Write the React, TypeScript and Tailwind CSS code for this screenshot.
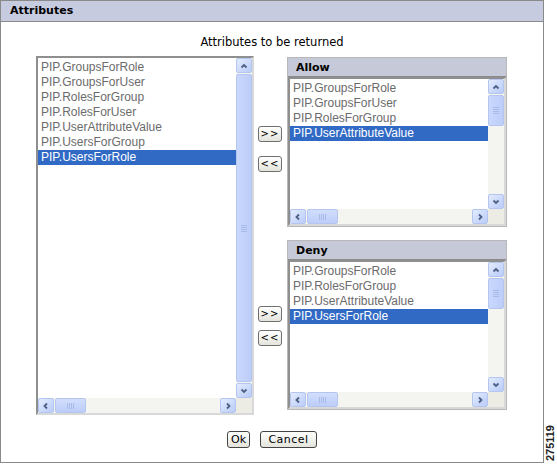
import React from "react";

type Dir = "up" | "down" | "left" | "right";

const chevrons: Record<Dir, string> = {
  up: "M1.5 5.5 L4 3 L6.5 5.5",
  down: "M1.5 2.5 L4 5 L6.5 2.5",
  left: "M5 1.5 L2.5 4 L5 6.5",
  right: "M3 1.5 L5.5 4 L3 6.5",
};

const ScrollBtn = ({ dir }: { dir: Dir }) => (
  <div className="w-[16px] h-[15px] shrink-0 rounded-[2px] border border-[#b4c6f0] bg-gradient-to-br from-[#e3ebfe] to-[#b9ccf8] flex items-center justify-center">
    <svg width="8" height="8" viewBox="0 0 8 8">
      <path d={chevrons[dir]} stroke="#4d6185" strokeWidth="1.8" fill="none" />
    </svg>
  </div>
);

const Grip = ({ vertical }: { vertical?: boolean }) =>
  vertical ? (
    <div className="flex flex-col gap-[1px]">
      {[0, 1, 2, 3].map((i) => (
        <div key={i} className="w-[6px] h-[1px] bg-[#a8bbe8]" />
      ))}
    </div>
  ) : (
    <div className="flex gap-[1px]">
      {[0, 1, 2, 3].map((i) => (
        <div key={i} className="w-[1px] h-[6px] bg-[#a8bbe8]" />
      ))}
    </div>
  );

const VScroll = ({ thumb }: { thumb: number | "full" }) => (
  <div className="w-[16px] flex flex-col bg-[#f4f4f0]">
    <ScrollBtn dir="up" />
    <div className="flex-1 flex flex-col py-[1px]">
      <div
        className={
          "w-[16px] rounded-[2px] border border-[#b4c6f0] bg-gradient-to-r from-[#c9d8fd] to-[#bccdf8] flex items-center justify-center " +
          (thumb === "full" ? "flex-1" : "")
        }
        style={thumb === "full" ? undefined : { height: thumb }}
      >
        <Grip vertical />
      </div>
    </div>
    <ScrollBtn dir="down" />
  </div>
);

const HScroll = () => (
  <div className="h-[15px] flex bg-[#f4f4f0]">
    <ScrollBtn dir="left" />
    <div className="flex-1 flex px-[1px]">
      <div className="w-[31px] h-[15px] rounded-[2px] border border-[#b4c6f0] bg-gradient-to-b from-[#d2defd] to-[#bccdf8] flex items-center justify-center">
        <Grip />
      </div>
    </div>
    <ScrollBtn dir="right" />
    <div className="w-[16px] bg-[#ecebe4]" />
  </div>
);

const ListBox = ({
  items,
  selected,
  height,
  thumb,
}: {
  items: string[];
  selected: number;
  height: number;
  thumb: number | "full";
}) => (
  <div
    className="w-[218px] flex flex-col border-2 border-t-[#8f8f8f] border-l-[#8f8f8f] border-r-[#d8d8d8] border-b-[#d8d8d8] bg-white"
    style={{ height }}
  >
    <div className="flex-1 flex min-h-0">
      <div className="flex-1 pt-[2px] font-['Liberation_Sans',Arial,sans-serif] text-[12px]">
        {items.map((it, i) => (
          <div
            key={it}
            className={
              "h-[15px] leading-[15px] pl-[3px] " +
              (i === selected ? "bg-[#316ac5] text-white" : "text-[#6b6b6b]")
            }
          >
            {it}
          </div>
        ))}
      </div>
      <VScroll thumb={thumb} />
    </div>
    <HScroll />
  </div>
);

const ArrowBtn = ({ label }: { label: string }) => (
  <button className="w-[24px] h-[16px] rounded-[3px] border border-[#6f6f6f] bg-gradient-to-b from-white to-[#e4e4dc] text-[10px] leading-[12px] text-black font-['DejaVu_Sans',sans-serif] tracking-[1px]">
    {label}
  </button>
);

const Panel = ({
  title,
  items,
  selected,
}: {
  title: string;
  items: string[];
  selected: number;
}) => (
  <div className="w-[220px] border border-[#b8b8b8] bg-white">
    <div className="h-[19px] bg-[#c6cad8] border-b border-[#8a8a8a] pl-[8px] text-[11px] leading-[19px] font-bold text-black font-['DejaVu_Sans',sans-serif]">
      {title}
    </div>
    <ListBox items={items} selected={selected} height={149} thumb={31} />
  </div>
);

export default function App() {
  const available = [
    "PIP.GroupsForRole",
    "PIP.GroupsForUser",
    "PIP.RolesForGroup",
    "PIP.RolesForUser",
    "PIP.UserAttributeValue",
    "PIP.UsersForGroup",
    "PIP.UsersForRole",
  ];
  const allow = [
    "PIP.GroupsForRole",
    "PIP.GroupsForUser",
    "PIP.RolesForGroup",
    "PIP.UserAttributeValue",
  ];
  const deny = [
    "PIP.GroupsForRole",
    "PIP.RolesForGroup",
    "PIP.UserAttributeValue",
    "PIP.UsersForRole",
  ];

  return (
    <div className="w-[557px] h-[466px] bg-white flex">
      <div className="w-[544px] h-[463px] border border-[#8a8a8a] flex flex-col">
        <div className="h-[21px] bg-[#c6cbe0] border-b border-[#8a8a8a] pl-[9px] text-[11px] leading-[20px] font-bold text-black font-['DejaVu_Sans',sans-serif]">
          Attributes
        </div>

        <div className="h-[34px] pt-[14px] text-center text-[11.5px] leading-[13px] text-black font-['DejaVu_Sans',sans-serif]">
          Attributes to be returned
        </div>

        <div className="flex pl-[35px]">
          <ListBox items={available} selected={6} height={359} thumb="full" />

          <div className="w-[24px] ml-[4px] flex flex-col">
            <div className="mt-[70px] flex flex-col gap-[14px]">
              <ArrowBtn label=">>" />
              <ArrowBtn label="<<" />
            </div>
            <div className="mt-[134px] flex flex-col gap-[8px]">
              <ArrowBtn label=">>" />
              <ArrowBtn label="<<" />
            </div>
          </div>

          <div className="ml-[5px] mt-[1px] flex flex-col gap-[13px]">
            <Panel title="Allow" items={allow} selected={3} />
            <Panel title="Deny" items={deny} selected={3} />
          </div>
        </div>

        <div className="flex justify-center gap-[10px] mt-[16px]">
          <button className="h-[17px] px-[3px] rounded-[3px] border border-[#444] bg-gradient-to-b from-white to-[#e4e4dc] text-[11px] leading-[14px] text-black font-['DejaVu_Sans',sans-serif]">
            Ok
          </button>
          <button className="h-[17px] w-[57px] rounded-[3px] border border-[#444] bg-gradient-to-b from-white to-[#e4e4dc] text-[11px] leading-[14px] text-black font-['DejaVu_Sans',sans-serif] tracking-[0.5px]">
            Cancel
          </button>
        </div>
      </div>

      <div className="flex-1 flex flex-col justify-end items-center pb-[5px]">
        <div className="[writing-mode:vertical-rl] rotate-180 text-[11px] font-bold text-[#222] font-['Liberation_Sans',Arial,sans-serif] leading-[11px]">
          275119
        </div>
      </div>
    </div>
  );
}
